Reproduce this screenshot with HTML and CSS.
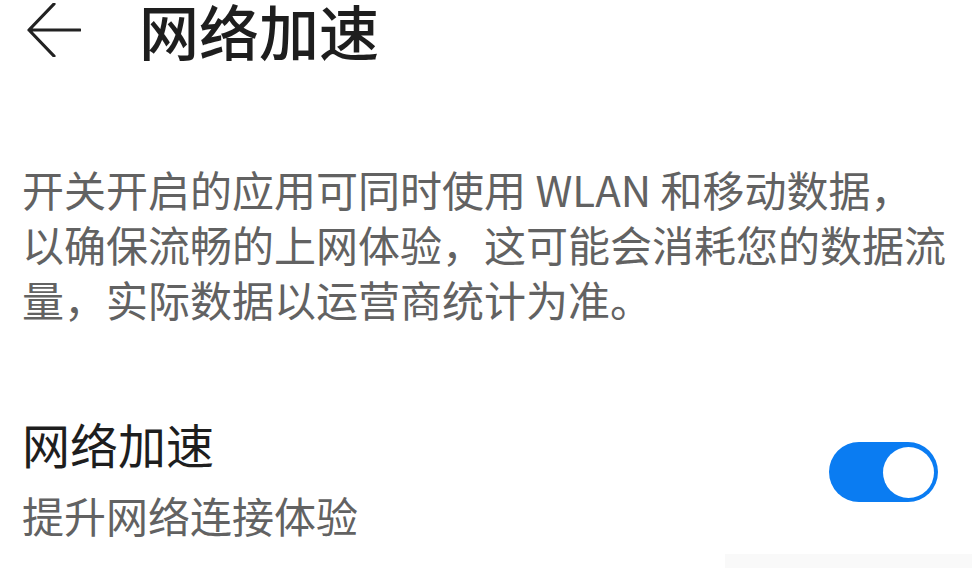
FILE: index.html
```html
<!DOCTYPE html>
<html lang="zh-CN">
<head>
<meta charset="utf-8">
<title>网络加速</title>
<link rel="stylesheet" href="styles.css">
</head>
<body>
<div class="page">
  <header class="topbar">
    <svg class="back" viewBox="0 0 54 54" width="54" height="54" aria-hidden="true">
      <path d="M53 27 H2 M27 1 L2 27 L27 53" fill="none" stroke="#222" stroke-width="3.2" stroke-linecap="round" stroke-linejoin="round"/>
    </svg>
    <h1 class="title">网络加速</h1>
  </header>
  <p class="desc">开关开启的应用可同时使用 WLAN 和移动数据，以确保流畅的上网体验，这可能会消耗您的数据流量，实际数据以运营商统计为准。</p>
  <div class="row">
    <div class="row-text">
      <div class="row-title">网络加速</div>
      <div class="row-sub">提升网络连接体验</div>
    </div>
    <div class="switch on"><span class="knob"></span></div>
  </div>
  <div class="next-row"></div>
</div>
</body>
</html>
```
FILE: styles.css
```css
html, body {
  margin: 0;
  padding: 0;
  background: #ffffff;
}
body {
  font-family: "Noto Sans CJK SC", "Noto Sans", sans-serif;
  width: 972px;
  height: 568px;
  overflow: hidden;
}
.page {
  display: flex;
  flex-direction: column;
}
.topbar {
  display: flex;
  align-items: center;
  height: 60px;
  padding-left: 27px;
}
.back {
  display: block;
}
.title {
  margin: 0 0 0 58px;
  font-size: 60px;
  line-height: 60px;
  font-weight: 500;
  color: #1e1e1e;
}
.desc {
  margin: 101px 20px 0 22px;
  font-size: 42px;
  line-height: 55px;
  color: #626262;
  font-weight: 400;
}
.row {
  display: flex;
  align-items: center;
  justify-content: space-between;
  margin-top: 89px;
  padding: 0 34px 0 22px;
}
.row-text {
  display: flex;
  flex-direction: column;
}
.row-title {
  font-size: 48px;
  line-height: 56px;
  color: #1e1e1e;
}
.row-sub {
  margin-top: 19px;
  font-size: 42px;
  line-height: 50px;
  color: #626262;
}
.switch {
  width: 109px;
  height: 60px;
  border-radius: 30px;
  background: #0a7cf2;
  box-sizing: border-box;
  padding: 5px 4px;
  display: flex;
  justify-content: flex-end;
  margin-top: -12px;
}
.knob {
  width: 51px;
  height: 51px;
  border-radius: 50%;
  background: #ffffff;
}
.next-row {
  margin: 14px 0 0 725px;
  height: 20px;
  background: #f9f9f9;
}
```
